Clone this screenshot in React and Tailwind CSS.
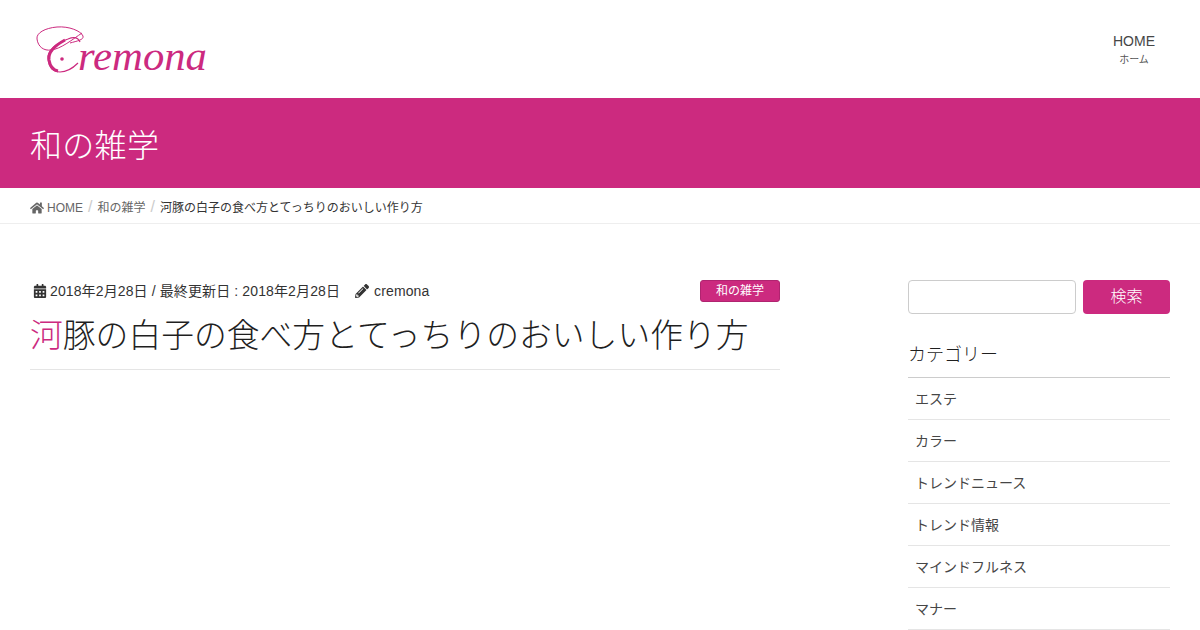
import { FaHome, FaCalendarAlt, FaPencilAlt } from "react-icons/fa";

const CATEGORIES = [
  "エステ",
  "カラー",
  "トレンドニュース",
  "トレンド情報",
  "マインドフルネス",
  "マナー",
];

const FONT = "font-['Liberation_Sans','Noto_Sans_CJK_JP',sans-serif]";

function Logo() {
  return (
    <svg width="190" height="62" viewBox="0 0 190 62" className="block">
      {/* C swash */}
      <path
        d="M35 22 C42 20 49 19 48 15 C46 10 34 5 22 6 C10 7 1 12 2 18 C3 26 9 30 16 29 C26 28 38 18 47 12"
        fill="none"
        stroke="#cc2a7f"
        strokeWidth="1"
      />
      <path
        d="M45 21 C43 16 38 16 33 18 C21 22 12 30 13 38 C14 47 19 51 25 51 C32 51 38 47 43 42"
        fill="none"
        stroke="#cc2a7f"
        strokeWidth="1.2"
      />
      <path
        d="M30 19 C19 25 13 32 14 39 C15 45 18 49 23 50"
        fill="none"
        stroke="#cc2a7f"
        strokeWidth="3"
      />
      <circle cx="27" cy="38" r="1.8" fill="#cc2a7f" />
      <text
        x="43"
        y="49"
        fill="#cc2a7f"
        textLength="129"
        lengthAdjust="spacingAndGlyphs"
        className="font-['Liberation_Serif',serif] italic text-[41px]"
      >
        remona
      </text>
    </svg>
  );
}

export default function App() {
  return (
    <div className={`h-[630px] overflow-hidden bg-white text-[#333] ${FONT}`}>
      {/* HEADER */}
      <header className="h-[98px] flex items-start justify-between pl-[35px] pr-[45px]">
        <div className="pt-[21px]">
          <Logo />
        </div>
        <nav className="pt-[32px] text-center text-[#464646]">
          <div className="text-[14px] leading-[18px]">HOME</div>
          <div className="text-[10px] leading-[14px] mt-[3px] text-[#555]">ホーム</div>
        </nav>
      </header>

      {/* PAGE TITLE */}
      <div className="h-[90px] bg-[#cc2a7f] px-[30px] pt-[6px] flex items-center">
        <h1 className="text-[32px] font-light tracking-[0.3px] text-white">和の雑学</h1>
      </div>

      {/* BREADCRUMB */}
      <div className="h-[36px] border-b border-[#eee] px-[30px] pt-[4px] flex items-center text-[12px] text-[#666]">
        <FaHome className="text-[14px] mr-[3px]" />
        <span>HOME</span>
        <span className="mx-[5px] -mt-[2px] text-[#ccc] text-[16px]">/</span>
        <span>和の雑学</span>
        <span className="mx-[5px] -mt-[2px] text-[#ccc] text-[16px]">/</span>
        <span className="text-[#333]">河豚の白子の食べ方とてっちりのおいしい作り方</span>
      </div>

      <div className="flex justify-between px-[30px] pt-[56px]">
        {/* ARTICLE */}
        <main className="w-[750px]">
          <div className="h-[22px] flex items-center justify-between">
            <div className="flex items-center text-[14px] tracking-[0.12px]">
              <FaCalendarAlt className="text-[14px] ml-[3px] mr-[3px]" />
              <span>2018年2月28日 / 最終更新日 : 2018年2月28日</span>
              <FaPencilAlt className="text-[14px] ml-[15px] mr-[5px]" />
              <span>cremona</span>
            </div>
            <span className="w-[80px] h-[22px] bg-[#cc2a7f] border border-[#b02470] rounded-[3px] text-white text-[12px] flex items-center justify-center">
              和の雑学
            </span>
          </div>
          <h2 className="mt-[12px] pb-[11px] border-b border-[#e5e5e5] text-[32.8px] leading-[44px] font-light text-[#1f1f1f]">
            <span className="text-[#cc2a7f]">河</span>豚の白子の食べ方とてっちりのおいしい作り方
          </h2>
        </main>

        {/* SIDEBAR */}
        <aside className="w-[262px]">
          <div className="flex gap-[7px]">
            <input className="w-[168px] h-[34px] border border-[#ccc] rounded-[4px] bg-white" />
            <button className="w-[87px] h-[34px] bg-[#cc2a7f] rounded-[4px] text-white text-[16px] font-light">検索</button>
          </div>
          <h3 className="mt-[26px] pt-[2px] pb-[8px] border-b border-[#ccc] text-[18px] leading-[27px] font-light text-[#1f1f1f]">
            カテゴリー
          </h3>
          <ul>
            {CATEGORIES.map((c) => (
              <li key={c} className="h-[42px] border-b border-[#e5e5e5] pl-[7px] pt-[1px] flex items-center text-[14px] text-[#464646]">
                {c}
              </li>
            ))}
          </ul>
        </aside>
      </div>
    </div>
  );
}
